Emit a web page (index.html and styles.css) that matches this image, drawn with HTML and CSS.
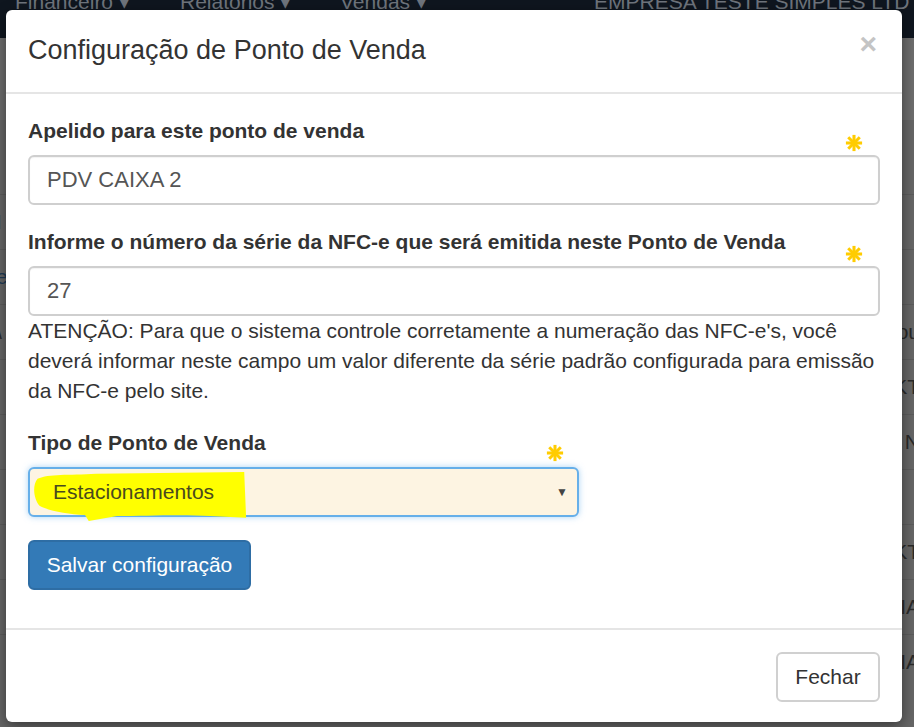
FILE: index.html
```html
<!DOCTYPE html>
<html lang="pt-BR">
<head>
<meta charset="utf-8">
<title>Configuração de Ponto de Venda</title>
<link rel="stylesheet" href="styles.css">
</head>
<body>
<div class="page">
  <nav class="navbar">
    <span class="nav-item nav-fin">Financeiro ▾</span>
    <span class="nav-item nav-rel">Relatórios ▾</span>
    <span class="nav-item nav-ven">Vendas ▾</span>
    <span class="nav-item nav-emp">EMPRESA TESTE SIMPLES LTD</span>
  </nav>
  <div class="page-band"></div>
  <div class="page-rows">
    <div class="prow"><span class="frag-l">I</span></div>
    <div class="prow"><span class="frag-l blue">es</span></div>
    <div class="prow"><span class="frag-l">\</span><span class="frag-r">ou</span></div>
    <div class="prow"><span class="frag-r">KT</span></div>
    <div class="prow"><span class="frag-r">N</span></div>
    <div class="prow"></div>
    <div class="prow"><span class="frag-r">KT</span></div>
    <div class="prow"><span class="frag-r">IA</span></div>
    <div class="prow"><span class="frag-r">IA</span></div>
  </div>
</div>

<div class="modal">
  <div class="modal-header">
    <h4 class="modal-title">Configuração de Ponto de Venda</h4>
    <span class="close">×</span>
  </div>
  <div class="modal-body">
    <div class="form-group">
      <label class="form-label">Apelido para este ponto de venda</label>
      <svg class="req" viewBox="0 0 20 20"><g stroke="#ffcc00" stroke-width="3.4"><line x1="10" y1="1" x2="10" y2="19"/><line x1="1" y1="10" x2="19" y2="10"/><line x1="3.6" y1="3.6" x2="16.4" y2="16.4"/><line x1="16.4" y1="3.6" x2="3.6" y2="16.4"/></g></svg>
      <div class="form-control">PDV CAIXA 2</div>
    </div>
    <div class="form-group g2">
      <label class="form-label">Informe o número da série da NFC-e que será emitida neste Ponto de Venda</label>
      <svg class="req" viewBox="0 0 20 20"><g stroke="#ffcc00" stroke-width="3.4"><line x1="10" y1="1" x2="10" y2="19"/><line x1="1" y1="10" x2="19" y2="10"/><line x1="3.6" y1="3.6" x2="16.4" y2="16.4"/><line x1="16.4" y1="3.6" x2="3.6" y2="16.4"/></g></svg>
      <div class="form-control">27</div>
      <p class="help">ATENÇÃO: Para que o sistema controle corretamente a numeração das NFC-e's, você deverá informar neste campo um valor diferente da série padrão configurada para emissão da NFC-e pelo site.</p>
    </div>
    <div class="form-group g3">
      <label class="form-label">Tipo de Ponto de Venda</label>
      <svg class="req req-sel" viewBox="0 0 20 20"><g stroke="#ffcc00" stroke-width="3.4"><line x1="10" y1="1" x2="10" y2="19"/><line x1="1" y1="10" x2="19" y2="10"/><line x1="3.6" y1="3.6" x2="16.4" y2="16.4"/><line x1="16.4" y1="3.6" x2="3.6" y2="16.4"/></g></svg>
      <div class="select">
        <span class="select-text">Estacionamentos</span>
        <span class="caret">▼</span>
        <svg class="marker" viewBox="0 0 230 64" preserveAspectRatio="none"><path d="M8 14 C 20 8, 40 10, 70 8 L 226 6 L 228 60 L 190 58 C 160 56, 120 58, 92 58 L 62 64 L 58 57 C 40 56, 20 52, 10 46 C 4 38, 2 22, 8 14 Z" fill="#ffff00"/></svg>
      </div>
    </div>
    <button class="btn btn-primary">Salvar configuração</button>
  </div>
  <div class="modal-footer">
    <button class="btn btn-default">Fechar</button>
  </div>
</div>
</body>
</html>
```

FILE: styles.css
```css
html, body {
  margin: 0;
  padding: 0;
  width: 914px;
  height: 727px;
  overflow: hidden;
  font-family: "Liberation Sans", Arial, sans-serif;
}

.page {
  width: 914px;
  height: 727px;
  background: #666666;
  display: flex;
  flex-direction: column;
}

.navbar {
  height: 38px;
  background: #0f161f;
  position: relative;
  flex: none;
  overflow: hidden;
}

.nav-item {
  position: absolute;
  top: -10px;
  font-size: 21px;
  color: #6e747c;
  white-space: nowrap;
}
.nav-fin { left: 15px; }
.nav-rel { left: 180px; }
.nav-ven { left: 340px; }
.nav-emp { left: 594px; font-size: 21px; }

.page-band {
  height: 82px;
  background: #6d6d6d;
  flex: none;
}

.page-rows {
  display: flex;
  flex-direction: column;
  padding-top: 74px;
}

.prow {
  height: 54px;
  border-top: 1px solid #5c5c5c;
  display: flex;
  justify-content: space-between;
  align-items: center;
  font-size: 21px;
  color: #2a2a2a;
}
.frag-l { margin-left: -4px; }
.frag-l.blue { color: #1f3a55; }
.frag-r { margin-left: auto; margin-right: -6px; }

.modal {
  position: absolute;
  left: 6px;
  top: 10px;
  width: 896px;
  height: 712px;
  background: #fff;
  border-radius: 6px;
  box-shadow: 0 4px 14px rgba(0,0,0,0.45);
  display: flex;
  flex-direction: column;
  color: #333;
}

.modal-header {
  display: flex;
  justify-content: space-between;
  align-items: flex-start;
  padding: 22px 22px 24px 22px;
  border-bottom: 2px solid #e5e5e5;
}

.modal-title {
  margin: 0;
  font-size: 27px;
  font-weight: normal;
  line-height: 36px;
  color: #333;
}

.close {
  font-size: 30px;
  font-weight: bold;
  color: #c4c4c4;
  line-height: 24px;
  margin-right: 3px;
}

.modal-body {
  padding: 25px 22px 38px 22px;
  flex: 1;
}

.form-group {
  position: relative;
}
.g2 { margin-top: 25px; }
.g3 { margin-top: 25px; }

.form-label {
  display: block;
  font-size: 21px;
  font-weight: bold;
  line-height: 24px;
  margin-bottom: 12px;
}

.req {
  position: absolute;
  right: 17px;
  top: 15px;
  width: 18px;
  height: 18px;
}
.req-sel {
  right: auto;
  left: 518px;
  top: 13px;
}

.form-control {
  height: 50px;
  box-sizing: border-box;
  border: 2px solid #cfcfcf;
  border-radius: 6px;
  padding: 0 17px;
  font-size: 22px;
  line-height: 46px;
  color: #555;
  box-shadow: inset 0 1px 1px rgba(0,0,0,0.05);
}

.help {
  margin: 0;
  font-size: 21px;
  line-height: 30px;
  color: #333;
}

.select {
  position: relative;
  width: 551px;
  height: 50px;
  box-sizing: border-box;
  margin-top: 10px;
  border: 2px solid #66afe9;
  border-radius: 6px;
  background: #fdf4e2;
  box-shadow: 0 0 6px rgba(102,175,233,0.55);
  display: flex;
  align-items: center;
  padding: 0 9px 0 23px;
  font-size: 21px;
  color: #555;
}
.select-text {
  position: relative;
  z-index: 1;
  color: #4a4a1e;
}
.caret {
  margin-left: auto;
  font-size: 12px;
  color: #444;
}
.marker {
  position: absolute;
  left: 0;
  top: -2px;
  width: 218px;
  height: 54px;
  z-index: 0;
}

.btn {
  font-family: "Liberation Sans", Arial, sans-serif;
  font-size: 21px;
  height: 50px;
  border-radius: 6px;
  cursor: pointer;
  box-sizing: border-box;
  padding: 0;
}

.btn-primary {
  margin-top: 23px;
  width: 223px;
  background: #337ab7;
  border: 2px solid #2e6da4;
  color: #fff;
}

.modal-footer {
  border-top: 2px solid #e5e5e5;
  padding: 22px 22px 20px 22px;
  display: flex;
  justify-content: flex-end;
}

.btn-default {
  width: 104px;
  background: #fff;
  border: 2px solid #d0d0d0;
  color: #333;
}
```
